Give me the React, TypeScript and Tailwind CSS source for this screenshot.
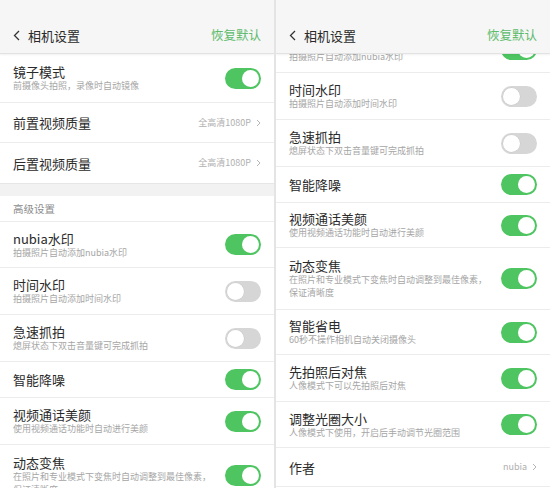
import React from 'react';

const font = { fontFamily: '"Noto Sans CJK SC", "Noto Sans", sans-serif' };

const Toggle: React.FC<{ on?: boolean }> = ({ on }) => (
  <div
    className={`w-[36px] h-[21px] rounded-full p-[2px] flex shrink-0 ${
      on ? 'bg-[#4ec561] justify-end' : 'bg-[#d6d6d6] justify-start'
    }`}
  >
    <div className={`w-[17px] h-[17px] rounded-full bg-white ${on ? '' : 'shadow-[0_0_0_0.5px_#c8c8c8]'}`} />
  </div>
);

const Chevron: React.FC<{ className?: string }> = ({ className }) => (
  <svg width="5" height="8" viewBox="0 0 5 8" className={className}>
    <polyline points="1,1 4,4 1,7" fill="none" stroke="#b5b5b5" strokeWidth="1" />
  </svg>
);

interface RowProps {
  title: string;
  sub?: string[];
  on?: boolean;
  value?: string;
  h: string;
  last?: boolean;
}

const Row: React.FC<RowProps> = ({ title, sub, on, value, h, last }) => (
  <div
    className={`${h} shrink-0 flex items-center justify-between pl-[13px] pr-[13px] ${
      last ? '' : 'border-b border-[#ececec]'
    }`}
  >
    <div className="flex flex-col">
      <span className="text-[13px] leading-[15px] text-[#2a2a2a]">{title}</span>
      {sub?.map((s) => (
        <span key={s} className="text-[9px] leading-[12px] text-[#a6a6a6] mt-[1px]">
          {s}
        </span>
      ))}
    </div>
    {value !== undefined ? (
      <div className="flex items-center gap-[5px]">
        <span className="text-[9px] text-[#b0b0b0]">{value}</span>
        <Chevron />
      </div>
    ) : (
      <Toggle on={on} />
    )}
  </div>
);

const Header = () => (
  <div className="h-[54px] shrink-0 bg-[#f6f6f6] border-b border-[#e2e2e2] shadow-[0_1px_2px_rgba(0,0,0,0.06)] flex items-end pb-[8px] px-[13px] justify-between relative z-10">
    <div className="flex items-center gap-[8px]">
      <svg width="7" height="11" viewBox="0 0 7 11">
        <polyline points="6,1 1.5,5.5 6,10" fill="none" stroke="#333" strokeWidth="1.3" />
      </svg>
      <span className="text-[13px] text-[#2a2a2a]">相机设置</span>
    </div>
    <span className="text-[12.5px] text-[#5dbb6c]">恢复默认</span>
  </div>
);

const LeftPanel = () => (
  <div className="flex flex-col bg-white h-[488px] overflow-hidden">
    <Header />
    <Row h="h-[49px]" title="镜子模式" sub={['前摄像头拍照，录像时自动镜像']} on />
    <Row h="h-[40px]" title="前置视频质量" value="全高清1080P" />
    <Row h="h-[40px]" title="后置视频质量" value="全高清1080P" last />
    <div className="h-[13px] shrink-0 bg-[#f2f2f2] border-t border-[#e6e6e6]" />
    <div className="h-[26px] shrink-0 flex items-center px-[13px] border-b border-[#ececec]">
      <span className="text-[10.5px] text-[#8c8c8c]">高级设置</span>
    </div>
    <Row h="h-[46px]" title="nubia水印" sub={['拍摄照片自动添加nubia水印']} on />
    <Row h="h-[47px]" title="时间水印" sub={['拍摄照片自动添加时间水印']} />
    <Row h="h-[47px]" title="急速抓拍" sub={['熄屏状态下双击音量键可完成抓拍']} />
    <Row h="h-[36px]" title="智能降噪" on />
    <Row h="h-[47px]" title="视频通话美颜" sub={['使用视频通话功能时自动进行美颜']} on />
    <Row
      h="h-[62px]"
      title="动态变焦"
      sub={['在照片和专业模式下变焦时自动调整到最佳像素，', '保证清晰度']}
      on
    />
  </div>
);

const RightPanel = () => (
  <div className="flex flex-col bg-white h-[488px] overflow-hidden">
    <Header />
    <div className="flex flex-col -mt-[28px]">
      <Row h="h-[47px]" title="nubia水印" sub={['拍摄照片自动添加nubia水印']} on />
      <Row h="h-[47px]" title="时间水印" sub={['拍摄照片自动添加时间水印']} />
      <Row h="h-[47px]" title="急速抓拍" sub={['熄屏状态下双击音量键可完成抓拍']} />
      <Row h="h-[36px]" title="智能降噪" on />
      <Row h="h-[45px]" title="视频通话美颜" sub={['使用视频通话功能时自动进行美颜']} on />
      <Row
        h="h-[62px]"
        title="动态变焦"
        sub={['在照片和专业模式下变焦时自动调整到最佳像素，', '保证清晰度']}
        on
      />
      <Row h="h-[45px]" title="智能省电" sub={['60秒不操作相机自动关闭摄像头']} on />
      <Row h="h-[47px]" title="先拍照后对焦" sub={['人像模式下可以先拍照后对焦']} on />
      <Row h="h-[46px]" title="调整光圈大小" sub={['人像模式下使用，开启后手动调节光圈范围']} on />
      <Row h="h-[39px]" title="作者" value="nubia" />
    </div>
  </div>
);

export default function App() {
  return (
    <div style={font} className="w-[550px] h-[488px] grid grid-cols-[274px_274px] gap-[2px] bg-[#e4e4e4] overflow-hidden">
      <LeftPanel />
      <RightPanel />
    </div>
  );
}
